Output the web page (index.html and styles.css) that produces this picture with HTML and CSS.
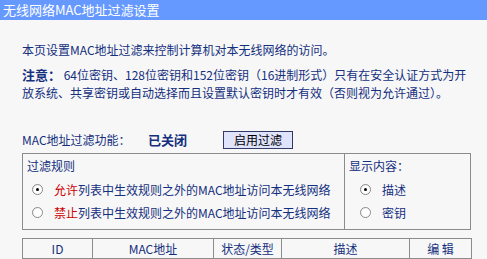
FILE: index.html
```html
<!DOCTYPE html>
<html lang="zh-CN">
<head>
<meta charset="utf-8">
<title>无线网络MAC地址过滤设置</title>
<link rel="stylesheet" href="styles.css">
</head>
<body>
<div class="title">无线网络MAC地址过滤设置</div>
<div class="content">
  <p class="intro">本页设置MAC地址过滤来控制计算机对本无线网络的访问。</p>
  <p class="note"><b class="note-label">注意：</b> 64位密钥、128位密钥和152位密钥（16进制形式）只有在安全认证方式为开<br>放系统、共享密钥或自动选择而且设置默认密钥时才有效（否则视为允许通过）。</p>
  <div class="status-row">
    <span class="status-label">MAC地址过滤功能：</span>
    <span class="status-value">已关闭</span>
    <button class="btn" type="button">启用过滤</button>
  </div>
  <div class="rules">
    <div class="rules-left">
      <div class="box-title">过滤规则</div>
      <label class="opt opt-left"><input type="radio" name="rule" checked><span><em class="red">允许</em>列表中生效规则之外的MAC地址访问本无线网络</span></label>
      <label class="opt opt-left"><input type="radio" name="rule"><span><em class="red">禁止</em>列表中生效规则之外的MAC地址访问本无线网络</span></label>
    </div>
    <div class="rules-right">
      <div class="box-title">显示内容：</div>
      <label class="opt opt-right"><input type="radio" name="show" checked><span>描述</span></label>
      <label class="opt opt-right"><input type="radio" name="show"><span>密钥</span></label>
    </div>
  </div>
  <table class="list">
    <colgroup>
      <col class="c-id"><col class="c-mac"><col class="c-state"><col class="c-desc"><col class="c-edit">
    </colgroup>
    <tr>
      <th>ID</th><th>MAC地址</th><th>状态/类型</th><th>描述</th><th>编 辑</th>
    </tr>
  </table>
</div>
</body>
</html>
```

FILE: styles.css
```css
html, body {
  margin: 0;
  padding: 0;
}
body {
  background: #f7f7f7;
  font-family: "Noto Sans CJK SC", "DejaVu Sans", sans-serif;
  font-size: 12px;
  color: #142f7e;
  width: 487px;
  height: 259px;
  overflow: hidden;
}
.title {
  height: 20px;
  line-height: 20px;
  background: #6699ff;
  color: #ffffff;
  font-size: 13px;
  padding-left: 3px;
}
.content {
  padding-left: 22px;
  width: 449px;
}
.intro {
  margin: 21px 0 0 0;
  line-height: 18px;
}
.note {
  margin: 7px 0 0 0;
  line-height: 18px;
  white-space: nowrap;
}
.note-label {
  font-weight: bold;
  font-size: 13px;
}
.status-row {
  margin-top: 28px;
  display: grid;
  grid-template-columns: 126px 75px auto;
  align-items: center;
  height: 18px;
}
.status-value {
  font-weight: bold;
  font-size: 13px;
}
.btn {
  justify-self: start;
  width: 70px;
  height: 18px;
  padding: 0;
  margin: 0;
  background: #dfe3fb;
  border: 1px solid #333a66;
  border-radius: 0;
  font-family: inherit;
  font-size: 12px;
  color: #000000;
  line-height: 16px;
}
.rules {
  margin-top: 5px;
  display: grid;
  grid-template-columns: 322px 127px;
  height: 77px;
  box-sizing: border-box;
  border: 1px solid #8c8c8c;
}
.rules-left {
  border-right: 1px solid #8c8c8c;
}
.box-title {
  padding: 4px 0 0 4px;
  line-height: 16px;
  height: 20px;
  box-sizing: border-box;
  margin-top: 0;
}
.rules-left .box-title,
.rules-right .box-title {
  height: 24px;
  padding-top: 4px;
}
.opt {
  display: flex;
  align-items: center;
  height: 23px;
}
.opt-left {
  padding-left: 9px;
}
.opt-right {
  padding-left: 15px;
}
.opt input {
  appearance: none;
  -webkit-appearance: none;
  margin: 0 11px 0 0;
  width: 11px;
  height: 11px;
  border-radius: 50%;
  border: 1px solid #8a8a8a;
  background: radial-gradient(circle at 60% 60%, #ffffff 55%, #dcdcdc 100%);
  box-sizing: border-box;
  position: relative;
  flex: none;
}
.opt input:checked::after {
  content: "";
  position: absolute;
  left: 3px;
  top: 3px;
  width: 3px;
  height: 3px;
  border-radius: 50%;
  background: #000000;
}
.opt em {
  font-style: normal;
}
.red {
  color: #cc0000;
}
.list {
  margin-top: 8px;
  width: 449px;
  border-collapse: collapse;
  table-layout: fixed;
}
.list th {
  font-weight: normal;
  height: 19px;
  padding: 0;
  line-height: 19px;
  border: 1px solid #8c8c8c;
  text-align: center;
}
.c-id { width: 70px; }
.c-mac { width: 121px; }
.c-state { width: 68px; }
.c-desc { width: 128px; }
.c-edit { width: 62px; }
```
